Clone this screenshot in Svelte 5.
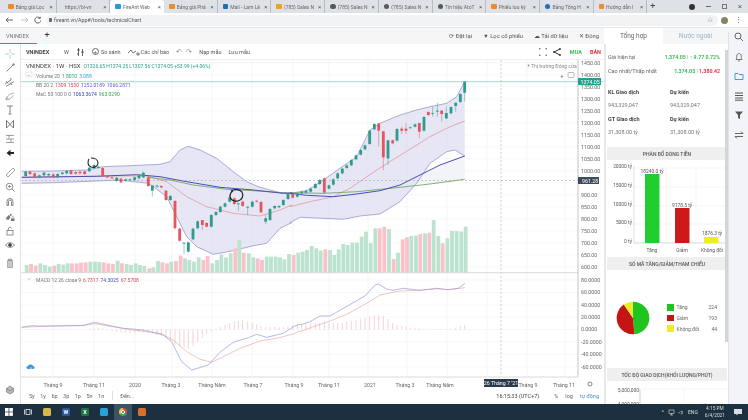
<script>
  const tabs = [
    ['Bảng giá Lọc', 'o'], ['https://bi-vn', 'b'], ['FireAnt Web', 'f'], ['Bảng giá Phá', 'o'],
    ['Mail - Lam Lê', 'm'], ['(785) Sales N', 'y'], ['(785) Sales N', 'g'], ['(785) Sales N', 'g'],
    ['Tín hiệu AtoT', 'g'], ['Phiếu lưu ký', 'o'], ['Bảng Tổng H', 'v'], ['Hướng dẫn l', 'o']
  ];
  const z7 = (p) => p.map(([x, y]) => [20 + x / 3, 100 + y / 3]);
  const z8 = (p) => p.map(([x, y]) => [290 + x / 3, 60 + y / 3]);
  const z9 = (p) => p.map(([x, y]) => [x / 3, 265 + y / 3]);
  const z10 = (p) => p.map(([x, y]) => [300 + x / 3, 265 + y / 3]);
  const line = (p) => p.map(([x, y], i) => `${i ? 'L' : 'M'}${x.toFixed(1)} ${y.toFixed(1)}`).join('');

  const upper = [...z7([[5,214],[100,213],[200,210],[250,200],[330,197],[420,193],[450,185],[480,150],[505,139],[540,150],[590,175],[640,215],[680,245],[720,262],[780,278],[815,280]]),
    ...z8([[0,400],[50,392],[100,360],[150,325],[200,290],[240,210],[270,190],[330,165],[380,150],[420,140],[470,130],[500,110],[524,65]])];
  const lower = [...z7([[5,250],[100,248],[230,243],[300,240],[385,250],[400,260],[440,290],[470,350],[500,410],[530,440],[580,463],[640,452],[700,437],[740,430],[780,385],[815,368]]),
    ...z8([[0,488],[30,472],[80,474],[160,478],[210,468],[270,462],[330,425],[380,370],[420,310],[470,275],[495,270],[524,288]])];
  const bandFill = line(upper) + [...lower].reverse().map(([x, y]) => `L${x.toFixed(1)} ${y.toFixed(1)}`).join('') + 'Z';
  const mid = [...z7([[5,232],[250,228],[380,228],[440,245],[500,290],[560,320],[640,340],[720,348],[780,330],[815,315]]),
    ...z8([[0,440],[60,425],[130,410],[180,385],[260,330],[340,280],[420,230],[480,200],[524,183]])];
  const ma50 = [...z7([[5,232],[230,229],[350,224],[420,230],[500,245],[600,262],[700,270],[790,280],[815,279]]),
    ...z8([[0,400],[50,406],[130,410],[200,402],[270,392],[330,375],[390,345],[450,315],[524,288]])];
  const ma100 = [...z7([[385,232],[450,240],[520,255],[620,268],[700,272],[790,278],[815,280]]),
    ...z8([[0,398],[100,400],[200,395],[330,382],[420,372],[524,358]])];
  const paleFill = line(z8([[375,372],[390,345],[450,315],[524,288],[524,358],[420,372]])) + 'Z';

  const c7 = [[17,215,228,'g'],[30,215,222,'r'],[44,220,232,'r'],[58,226,232,'g'],[72,218,226,'g'],[86,222,226,'g'],[100,223,232,'r'],[113,222,232,'g'],[127,218,222,'g'],[140,213,220,'g'],[153,212,222,'r'],[167,216,221,'r'],[180,215,220,'r'],[194,214,222,'r'],[208,203,214,'g'],[222,195,205,'g'],[235,200,204,'g'],[248,204,228,'r'],[262,228,232,'r'],[276,232,235,'r'],[290,233,243,'g'],[303,236,247,'r'],[317,238,243,'g'],[330,238,241,'g'],[344,232,240,'g'],[357,226,235,'g'],[370,218,232,'g'],[385,232,258,'r'],[397,256,272,'g',256,290],[411,257,260,'g'],[424,258,262,'r'],[438,272,300,'r'],[451,288,300,'g'],[465,303,385,'r'],[479,386,422,'r'],[492,428,431,'g',428,462],[505,427,455,'g'],[519,386,418,'g'],[533,364,385,'g'],[547,360,375,'r',360,390],[560,369,380,'r'],[574,345,380,'g'],[588,336,345,'g'],[601,320,336,'g'],[615,310,320,'g'],[629,292,305,'g'],[643,295,312,'r'],[655,310,313,'g',310,333],[668,305,318,'r'],[683,320,323,'g',320,345],[697,305,320,'g'],[710,302,305,'r'],[723,306,337,'r'],[737,355,365,'g',345,372],[750,327,360,'g'],[764,318,325,'g'],[777,318,322,'g'],[790,300,315,'g'],[804,282,297,'g']];
  const c8 = [[8,402,413,'r'],[22,400,410,'g'],[35,395,400,'g'],[48,392,398,'g'],[62,386,395,'g'],[76,372,384,'g'],[89,360,372,'g'],[103,355,398,'r'],[117,376,386,'g'],[130,358,374,'g'],[143,340,355,'g'],[157,326,340,'g'],[170,316,324,'g'],[184,300,316,'g'],[198,286,298,'g'],[212,270,284,'g'],[225,256,268,'g'],[239,212,252,'g'],[253,192,208,'g'],[266,190,212,'r',190,260],[280,214,292,'r',214,330],[294,241,295,'g',241,315],[308,241,250,'r'],[321,207,242,'g'],[335,206,212,'r',200,222],[348,206,212,'r',190,222],[361,202,204,'g'],[375,193,200,'g'],[388,189,215,'r',189,235],[402,171,212,'g'],[415,156,165,'r'],[428,159,161,'g',140,170],[442,152,155,'g',128,170],[455,152,162,'r',150,185],[469,159,175,'g',140,178],[483,141,160,'g'],[497,128,138,'g',128,155],[511,102,126,'g'],[524,64,98,'g',64,125]];
  const v7 = [495,492,497,490,495,500,497,492,494,490,490,490,488,487,485,485,486,487,490,492,482,490,492,495,490,495,498,505,502,483,487,490,485,483,467,475,480,485,472,480,468,490,480,463,472,460,445,420,458,460,472,475,480,470,470,470,472,478,462,468];
  const v8 = [585,578,575,570,558,565,572,568,570,585,568,552,555,548,548,530,515,550,505,505,500,507,597,578,538,532,528,527,522,520,518,480,528,550,535,513,513,515,500];

  const candles = [
    ...c7.map(([x, o, c, k, h, l], i) => ({ x: 20 + x / 3, o: 100 + o / 3, c: 100 + c / 3, k, h: 100 + (h ?? o - 3) / 3, l: 100 + (l ?? c + 3) / 3, v: 100 + v7[i] / 3 })),
    ...c8.map(([x, o, c, k, h, l], i) => ({ x: 290 + x / 3, o: 60 + o / 3, c: 60 + c / 3, k, h: 60 + (h ?? o - 3) / 3, l: 60 + (l ?? c + 3) / 3, v: 60 + v8[i] / 3 }))
  ];

  const macd = [...z9([[65,187],[95,182],[120,183],[160,183],[250,181],[285,172],[330,182],[370,190],[430,195],[490,210],[515,230],[545,290],[575,315],[625,300],[660,262],[700,232],[745,218],[770,208],[800,217],[850,205],[880,185],[898,178]]),
    ...z10([[0,180],[30,170],[60,153],[90,153],[130,130],[195,93],[225,60],[235,57],[260,72],[280,76],[310,70],[360,76],[410,70],[445,74],[475,70],[495,55]])];
  const signal = [...z9([[65,187],[160,183],[250,182],[285,176],[330,184],[400,195],[480,205],[520,225],[560,260],[600,283],[635,292],[670,275],[720,250],[780,228],[830,220],[880,207],[898,198]]),
    ...z10([[0,200],[40,185],[90,168],[140,148],[200,115],[240,90],[300,78],[360,76],[410,71],[445,74],[495,68]])];

  const histKeys = [[22,330],[88,329.5],[90,328],[100,327.5],[110,331],[125,333],[145,332],[165,337],[175,345],[190,349],[205,335],[215,329],[225,325],[235,321],[243,320],[255,324],[265,327],[285,327],[300,324],[320,323],[340,323],[365,318],[375,315],[382,315],[388,319],[395,325],[415,328],[433,329],[450,329],[465,325]];
  const histAt = (x) => {
    for (let i = 1; i < histKeys.length; i++) {
      if (x <= histKeys[i][0]) {
        const [a, b] = histKeys[i - 1], [c, d] = histKeys[i];
        return b + ((d - b) * (x - a)) / (c - a);
      }
    }
    return 329.5;
  };
  const hist = candles.map((c) => ({ x: c.x, y: histAt(c.x) }));

  const gridX = [53, 94, 135, 172, 212, 252, 293, 329, 368, 407, 447, 487, 527, 565];
  const prices = [1450, 1400, 1350, 1300, 1250, 1200, 1150, 1100, 1050, 1000, 950, 900, 850, 800, 750, 700, 650, 600];
  const priceY = (p) => 62.7 + (1450 - p) * 0.24;
  const macdTicks = [[280, '80.0000'], [292.5, '60.0000'], [305, '40.0000'], [317, '20.0000'], [329.5, '0.0000'], [342, '-20.0000'], [354.5, '-40.0000'], [367, '-60.0000']];
  const times = [[53,'Tháng 9'],[94,'Tháng 11'],[135,'2020'],[171,'Tháng 3'],[212,'Tháng Năm'],[253,'Tháng 7'],[294,'Tháng 9'],[329,'Tháng 11'],[370,'2021'],[405,'Tháng 3'],[440,'Tháng Năm'],[528,'Tháng 9'],[564,'Tháng 11']];
  const ranges = ['5y', '1y', '6p', '3p', '1p', '5n', '1n'];

  const pieData = [[224, '#1fc41f'], [193, '#c41414'], [44, '#ecec2c']];
  const total = 461;
  let acc = 0;
  const pie = pieData.map(([v, color]) => {
    const a0 = (acc / total) * Math.PI * 2;
    acc += v;
    const a1 = (acc / total) * Math.PI * 2;
    const pt = (a) => `${(17 + 16.3 * Math.sin(a)).toFixed(2)} ${(17 - 16.3 * Math.cos(a)).toFixed(2)}`;
    return { d: `M17 17L${pt(a0)}A16.3 16.3 0 ${a1 - a0 > Math.PI ? 1 : 0} 1 ${pt(a1)}Z`, color };
  });
</script>

<div class="screen">
  <div class="tabstrip">
    {#each tabs as [name, kind], i}
      <div class="tab" class:active={i === 2}>
        <span class="fav {kind}"></span><span class="tabname">{name}</span><span class="x">×</span>
      </div>
    {/each}
    <span class="newtab">+</span>
    <span class="winctl">
      <span class="rec"></span><span class="min"></span><span class="res"></span><span class="cl">×</span>
    </span>
  </div>

  <div class="addr">
    <svg class="nav" width="44" height="10" viewBox="0 0 44 10" fill="none" stroke="#555" stroke-width="0.9">
      <path d="M11 5H4M6.500 2.500L4 5l2.500 2.500" />
      <path d="M19 5h7M23.500 2.500L26 5l-2.500 2.500" stroke="#bbb" />
      <path d="M38 3a3 3 0 1 0 .8 2.500M38.300 1.800V3.400H36.700" />
    </svg>
    <div class="url"><span class="lock"></span>fireant.vn/App#/tools/technicalChart</div>
    <span class="star">☆</span>
    <span class="avatar"></span>
    <span class="dots">⋮</span>
  </div>

  <div class="apphead">
    <div class="indextab">VNINDEX</div>
    <span class="plus">+</span>
    <div class="headbtns">
      <span>⟳ Đặt lại</span><span>▼ Lọc cổ phiếu</span><span>☁ Tải dữ liệu</span><span>✕ Đóng</span>
    </div>
    <div class="sidetabs"><span class="on">Tổng hợp</span><span class="off">Nước ngoài</span></div>
    <div class="railtop"></div>
  </div>

  <div class="main">
    <div class="tools">
      <svg width="10" height="10" viewBox="0 0 10 10" fill="none" stroke="#7fcfc4" stroke-width=".7"><path d="M5 0v4M5 6v4M0 5h4M6 5h4" /></svg>
      <svg width="10" height="10" viewBox="0 0 10 10" fill="none" stroke="#777" stroke-width=".9"><path d="M1.500 8.500L8.500 1.500" /><circle cx="8.500" cy="1.500" r=".8" /></svg>
      <svg width="10" height="10" viewBox="0 0 10 10" fill="none" stroke="#666" stroke-width=".8"><path d="M0 7l6-4M1 9.500l8-5M5 1l1.500 2M1 4l2 2.500M5 5.500l2 2.500" /></svg>
      <svg width="10" height="10" viewBox="0 0 10 10" fill="none" stroke="#888" stroke-width=".7"><path d="M1 8c1-3 3-5 8-6M3 8.500c2.500 0 4-2 5-4" /><circle cx="2" cy="8" r="1" /></svg>
      <svg width="10" height="10" viewBox="0 0 10 10" fill="none" stroke="#777" stroke-width=".9"><path d="M2 1h6M5 1v8M3.500 9h3" /></svg>
      <svg width="10" height="10" viewBox="0 0 10 10" fill="none" stroke="#666" stroke-width=".9"><path d="M1.500 9V1.500L5 5.500l3.500-4V9M1.500 9L5 5.500 8.500 9" /></svg>
      <svg width="10" height="10" viewBox="0 0 10 10" fill="none" stroke="#777" stroke-width=".7"><path d="M1 1.500h8M1 5h8M1 8.500h8M4 1.500v3M6 5v3.500" /></svg>
      <svg width="10" height="10" viewBox="0 0 10 10" fill="#222"><path d="M1.500 5L5.500 1.800V4H9v2H5.500v2.200z" /></svg>
      <svg class="ruler" width="11" height="11" viewBox="0 0 11 11" fill="none" stroke="#888" stroke-width=".8"><path d="M1 8l7-7 2 2-7 7z" /></svg>
      <svg width="10" height="10" viewBox="0 0 10 10" fill="none" stroke="#777" stroke-width=".8"><circle cx="4.500" cy="4.500" r="3.300" /><path d="M7 7l2.500 2.500M3 4.500h3M4.500 3v3" /></svg>
      <svg class="magnet" width="10" height="10" viewBox="0 0 10 10" fill="none" stroke="#777" stroke-width=".9"><path d="M2 8.500V4.500a3 3 0 0 1 6 0v4H6.500v-4a1.500 1.500 0 0 0-3 0v4z" /></svg>
      <svg width="10" height="10" viewBox="0 0 10 10" fill="#777"><path d="M0.500 7l3-4 2 2-2 3zM5.500 1.500L7 3 5.800 4.200 4.500 3z" /><rect x="6" y="6.500" width="3.500" height="2.500" /><path d="M6.800 6.500V5.500a1 1 0 0 1 2 0v1" fill="none" stroke="#777" stroke-width=".5" /></svg>
      <svg width="10" height="10" viewBox="0 0 10 10" fill="none" stroke="#777" stroke-width=".8"><rect x="2" y="4.500" width="6" height="4.500" /><path d="M3.300 4.500V3a1.700 1.700 0 0 1 3.300-.5" /></svg>
      <svg class="eye" width="10" height="10" viewBox="0 0 10 10" fill="none" stroke="#555" stroke-width=".7"><path d="M.5 5c2-3 7-3 9 0-2 3-7 3-9 0z" /><circle cx="5" cy="5" r="1.500" fill="#333" /></svg>
      <svg width="10" height="10" viewBox="0 0 10 10" fill="#c8c8c8" stroke="#888" stroke-width=".6"><path d="M2.500 2.500h5V9.500h-5zM3.500 1h3v1.500h-3z" /></svg>
      <svg class="bulb" width="10" height="10" viewBox="0 0 10 10" fill="#bbb" stroke="#777" stroke-width=".7"><path d="M5 1l3.500 2.500V7L5 9 1.500 7V3.500z" /><path d="M1.500 3.500L5 6l3.500-2.500" fill="none" /></svg>
    </div>

    <div class="center">
      <div class="charttools">
        <b class="sym">VNINDEX</b>
        <span class="ti w">W</span>
        <svg class="ti" width="9" height="10" viewBox="0 0 9 10" fill="none" stroke="#555" stroke-width="0.9"><path d="M2.500 1v8M6.500 2v7M1 3h3M5 5h3M1 7h2" /></svg>
        <span class="ti add"><i>+</i> So sánh</span>
        <span class="ti ind"><svg width="12" height="8" viewBox="0 0 12 8" fill="none" stroke="#555" stroke-width="0.8"><path d="M0 5l3-3 2 3 3-2M8 6h4M10 4v4" /></svg> Các chỉ báo</span>
        <span class="ti undo">↶</span><span class="ti redo">↷</span>
        <span class="ti load">Nạp mẫu</span>
        <span class="ti">Lưu mẫu</span>
        <span class="tright">
          <svg width="8" height="8" viewBox="0 0 8 8" fill="none" stroke="#444" stroke-width="0.8"><path d="M0 2V0h2M6 0h2v2M8 6v2H6M2 8H0V6" /></svg>
          <svg class="share" width="8" height="8" viewBox="0 0 8 8" fill="none" stroke="#333"><path d="M7 1L1 4l6 3" /><circle cx="7" cy="1" r=".6" /><circle cx="1" cy="4" r=".6" /><circle cx="7" cy="7" r=".6" /></svg>
          <b class="buy">MUA</b><b class="sell">BÁN</b>
        </span>
      </div>

      <svg class="chart" width="583" height="331" viewBox="21 60 583 331" font-family="Roboto, sans-serif">
        <rect x="21" y="60" width="583" height="331" fill="#fff" />
        {#each gridX as x}<line x1={x} x2={x} y1="60" y2="376" stroke="#eef1f5" stroke-width="0.7" />{/each}
        {#each prices as p}<line x1="21" x2="578" y1={priceY(p)} y2={priceY(p)} stroke="#f1f3f7" stroke-width="0.7" />{/each}
        {#each macdTicks as [y]}<line x1="21" x2="578" y1={y} y2={y} stroke="#f1f3f7" stroke-width="0.7" />{/each}

        <path d={paleFill} fill="#f3f3fa" />
        <path d={bandFill} fill="#dcdcf0" fill-opacity="0.7" />
        <path d={line(upper)} fill="none" stroke="#8d8bc8" stroke-width="0.7" />
        <path d={line(lower)} fill="none" stroke="#8d8bc8" stroke-width="0.7" />

        {#each candles as c}
          <rect x={c.x - 0.9} y={c.v} width="3.800" height={Math.max(272.5 - c.v, 0)} fill={c.k === 'g' ? '#bbe3d0' : '#f9c2c8'} />
        {/each}

        <path d={line(mid)} fill="none" stroke="#e08f98" stroke-width="0.7" />
        <path d={line(ma100)} fill="none" stroke="#6faa62" stroke-width="0.9" />
        <path d={line(ma50)} fill="none" stroke="#4a4fb5" stroke-width="1" />

        {#each candles as c}
          <line x1={c.x} x2={c.x} y1={c.h} y2={c.l} stroke={c.k === 'g' ? '#3a9e90' : '#d9616b'} stroke-width="0.5" />
          <rect x={c.x - 1.4} y={c.o} width="2.800" height={Math.max(c.c - c.o, 0.8)} fill={c.k === 'g' ? '#2e9b8d' : '#e5555f'} />
        {/each}

        <path d="M89 159c-2 3-1 7 2 8 4 1 7-1 7-4 0-3-3-5-7-5" fill="none" stroke="#222" stroke-width="1.100" />
        <path d="M231 191c3-2 9-2 11 1 2 4 0 8-4 9-5 1-8-2-8-5 0-2 1-4 3-5" fill="none" stroke="#222" stroke-width="1.200" />

        <line x1="21" x2="604" y1="81.700" y2="81.700" stroke="#7cc8b8" stroke-width="0.7" />
        <line x1="21" x2="578" y1="180.500" y2="180.500" stroke="#999" stroke-width="0.5" stroke-dasharray="2 2" />
        <line x1="501" x2="501" y1="60" y2="376" stroke="#999" stroke-width="0.5" stroke-dasharray="2 2" />

        <line x1="21" x2="578" y1="272.700" y2="272.700" stroke="#cfcfcf" stroke-width="0.8" />
        <line x1="21" x2="578" y1="377" y2="377" stroke="#d0d0d0" stroke-width="0.8" />
        <line x1="578" x2="578" y1="60" y2="377" stroke="#aab" stroke-width="0.7" />

        {#each hist as h}
          <line x1={h.x} x2={h.x} y1={329.5} y2={h.y} stroke="#f2c0be" stroke-width="0.7" />
        {/each}
        <path d={line(signal)} fill="none" stroke="#e8a09c" stroke-width="0.6" />
        <path d={line(macd)} fill="none" stroke="#9a9ad8" stroke-width="0.7" />

        {#each prices as p}
          {#if p !== 950}<text x="581" y={priceY(p) + 1.800} class="ax">{p}.00</text>{/if}
        {/each}
        <rect x="578" y="78" width="23" height="7" fill="#27a08d" /><text x="580.500" y="83.600" class="ax white">1374.05</text>
        <rect x="578" y="177" width="21" height="7" fill="#3d4b5a" /><text x="582" y="182.600" class="ax white">961.28</text>
        {#each macdTicks as [y, t]}<text x="581" y={y + 1.800} class="ax">{t}</text>{/each}
        {#each times as [x, t]}<text x={x} y="387" class="ax" text-anchor="middle">{t}</text>{/each}
        <rect x="484" y="379" width="34" height="8" fill="#2a3a4b" /><text x="501" y="385" class="ax white" text-anchor="middle">26 Tháng 7 '21</text>
        <circle cx="590" cy="384" r="2" fill="none" stroke="#555" stroke-width="0.7" />

        <text x="26" y="68" class="leg"><tspan fill="#444" font-size="6">VNINDEX · 1W · HSX</tspan><tspan dx="3" fill="#2a9d8f">O1326.65 H1374.25 L1307.56 C1374.05 +53.99 (+4.06%)</tspan></text>
        <rect x="26" y="72" width="6" height="5" fill="#fff" stroke="#ccc" stroke-width="0.4" /><text x="29" y="76.500" class="leg" fill="#555" text-anchor="middle">−</text>
        <text x="36" y="77.500" class="leg"><tspan fill="#777">Volume 20</tspan><tspan dx="2" fill="#2ba66a">1.8010</tspan><tspan dx="2" fill="#3aa0d8">3.088</tspan></text>
        <text x="36" y="87" class="leg"><tspan fill="#777">BB 20 2</tspan><tspan dx="2" fill="#d8485a">1309.1530</tspan><tspan dx="2" fill="#6a5acd">1252.0189</tspan><tspan dx="2" fill="#6a5acd">1066.2871</tspan></text>
        <text x="36" y="96" class="leg"><tspan fill="#777">MaC 50 100 0 0</tspan><tspan dx="2" fill="#3b44b0">1063.3674</tspan><tspan dx="2" fill="#3a9d4c">963.0290</tspan></text>
        <text x="36" y="281.500" class="leg"><tspan fill="#777">MACD 12 26 close 9</tspan><tspan dx="2" fill="#d8485a">6.7317</tspan><tspan dx="2" fill="#4a4fb5">74.3025</tspan><tspan dx="2" fill="#d8485a">67.5708</tspan></text>
        <path d="M28 278.500l1 1 1-1" fill="none" stroke="#666" stroke-width="0.5" />

        <circle cx="528.500" cy="65.500" r="0.900" fill="#889" /><text x="531" y="67.500" class="leg" fill="#888">Thị trường Đóng cửa</text>
        <text x="562" y="77.500" class="leg" text-anchor="middle" fill="#555">+</text>
        <rect x="568" y="72.500" width="6" height="5" rx="1" fill="none" stroke="#777" stroke-width="0.5" />

        <path d="M28 369c-2 0-2-3 0-3 1-2 4-2 5 0 2 0 2 3 0 3z" fill="#3a9ad9" />
        <path d="M30 369l1-1.500 1 1.500" fill="none" stroke="#fff" stroke-width="0.5" />
      </svg>

      <div class="rangebar">
        {#each ranges as r}<span>{r}</span>{/each}
        <span class="sep"></span>
        <span>Đến...</span>
        <span class="rr"><span class="clock">16:15:33 (UTC+7)</span><span>%</span><span>log</span><span class="auto">tự động</span></span>
      </div>
    </div>

    <div class="side">
      <div class="row rowtop"><span>Giá hiện tại</span><span class="v"><em class="up">1,374.05</em> | <em class="up">↑ 9.77 0.72%</em></span></div>
      <div class="row"><span>Cao nhất/Thấp nhất</span><span class="v"><em class="up">1,374.05</em> | <em class="dn">1,380.42</em></span></div>
      <div class="pair head first"><b>KL Giao dịch</b><b>Dự kiến</b></div>
      <div class="pair"><span>943,329,047</span><span>943,329,047</span></div>
      <div class="pair head"><b>GT Giao dịch</b><b>Dự kiến</b></div>
      <div class="pair"><span>31,308.00 tỷ</span><span>31,308.00 tỷ</span></div>

      <div class="sec s1">PHÂN BỔ DÒNG TIỀN</div>
      <svg class="bars" width="122" height="96" viewBox="604 160 122 96" font-family="Roboto, sans-serif">
        <line x1="664" x2="664" y1="165" y2="242" stroke="#f0f0f0" stroke-width="0.7" />
        <line x1="694" x2="694" y1="165" y2="242" stroke="#f0f0f0" stroke-width="0.7" />
        {#each [[167,'20000 tỷ'],[186,'15000 tỷ'],[205,'10000 tỷ'],[223,'5000 tỷ'],[242,'0 tỷ']] as [y, t]}
          <text x="630" y={y} class="bt" text-anchor="end">{t}</text>
          <line x1="631" x2="726" y1={y} y2={y} stroke="#f0f0f0" stroke-width="0.7" />
        {/each}
        <line x1="632" x2="632" y1="165" y2="242" stroke="#ccc" stroke-width="0.6" />
        <line x1="632" x2="726" y1="242" y2="242" stroke="#ccc" stroke-width="0.6" />
        <rect x="643" y="173" width="14.500" height="69" fill="#1fcf2f" />
        <rect x="673" y="207" width="14.500" height="35" fill="#cc1a1a" />
        <rect x="702" y="236" width="14.500" height="6" fill="#eeee22" />
        <text x="650" y="172" class="bt" text-anchor="middle">18240.0 tỷ</text>
        <text x="680" y="206" class="bt" text-anchor="middle">9178.5 tỷ</text>
        <text x="710" y="234" class="bt" text-anchor="middle">1876.3 tỷ</text>
        <text x="650" y="251" class="bt" text-anchor="middle">Tăng</text>
        <text x="680" y="251" class="bt" text-anchor="middle">Giảm</text>
        <text x="710" y="251" class="bt" text-anchor="middle">Không đổi</text>
      </svg>

      <div class="sec s2">SỐ MÃ TĂNG/GIẢM/THAM CHIẾU</div>
      <div class="piebox">
        <svg width="34" height="34" viewBox="0 0 34 34">
          {#each pie as p}<path d={p.d} fill={p.color} />{/each}
        </svg>
        <div class="legend">
          <div><i class="sw gr"></i><span>Tăng</span><em>224</em></div>
          <div><i class="sw re"></i><span>Giảm</span><em>193</em></div>
          <div><i class="sw ye"></i><span>Không đổi</span><em>44</em></div>
        </div>
      </div>

      <div class="sec s3">TỐC ĐỘ GIAO DỊCH(KHỐI LƯỢNG/PHÚT)</div>
      <svg class="speed" width="122" height="26" viewBox="604 378 122 26" font-family="Roboto, sans-serif">
        <text x="637" y="388.500" class="bt" text-anchor="end" font-size="5.800">5,000,000</text>
        <text x="637" y="403" class="bt" text-anchor="end" font-size="5.800">4,000,000</text>
        <path d="M638 387v17M636 387h2M636 402h2" stroke="#999" stroke-width="0.5" fill="none" />
        <path d="M638 386H726M682 386v18" stroke="#eee" stroke-width="0.6" fill="none" />
        <path d="M696 403c3-2 11-2 15 0" stroke="#35b04a" stroke-width="1.500" stroke-dasharray="1.500 .6" fill="none" />
      </svg>
      <div class="thumb"></div>
    </div>

    <div class="rail">
      <svg width="10" height="10" viewBox="0 0 10 10" fill="none" stroke="#666"><circle cx="4" cy="4" r="3" /><path d="M6.200 6.200L9 9" /></svg>
      <svg width="10" height="10" viewBox="0 0 10 10" fill="none" stroke="#666" stroke-width=".9"><path d="M2 7.500c1-1 .5-3 1-4.500 1-2 3-2 4 0 .5 1.500 0 3.500 1 4.500zM4 8.500c.5.700 1.500.7 2 0" /></svg>
      <svg width="10" height="10" viewBox="0 0 10 10" fill="none" stroke="#3a8fc4" stroke-width=".9"><path d="M1 2.500h3l1 1h4v5H1z" /></svg>
      <svg width="10" height="10" viewBox="0 0 10 10" fill="none" stroke="#555"><path d="M1 2h8M1 4.500h8M1 7h8M1 9.200h8" /></svg>
      <svg width="10" height="10" viewBox="0 0 10 10" fill="#555"><path d="M1 1.500h8L6 5v4L4 8V5z" /></svg>
      <svg width="10" height="10" viewBox="0 0 10 10" fill="none" stroke="#555" stroke-width=".9"><path d="M1 3.500h8L7 1.500M9 6.500H1l2 2" /></svg>
    </div>
  </div>

  <div class="taskbar">
    <svg width="8" height="8" viewBox="0 0 8 8" fill="#fff" class="win"><rect width="3.600" height="3.600" /><rect x="4.300" width="3.600" height="3.600" /><rect y="4.300" width="3.600" height="3.600" /><rect x="4.300" y="4.300" width="3.600" height="3.600" /></svg>
    <svg width="8" height="8" viewBox="0 0 8 8" fill="none" stroke="#fff" stroke-width=".7" class="tv"><rect x="2" y="1.500" width="4" height="5" /><path d="M0.500 1.500V6.500M7.500 1.500V6.500" /></svg>
    <span class="app ex"></span>
    <span class="app wd">W</span>
    <span class="app xl">X</span>
    <span class="app ol"></span>
    <span class="crbox"><i></i></span>
    <span class="app pp"></span>
    <span class="tray">
      <span class="caret">^</span>
      <svg width="7" height="7" viewBox="0 0 7 7" fill="none" stroke="#ddd" stroke-width=".6"><rect x="1" y="1" width="5" height="3.500" /><path d="M3.500 4.500V6M2 6h3" /></svg>
      <span class="snd">◁ı</span>
      <span class="eng">ENG</span>
      <span class="clk"><span>4:15 PM</span><span>6/4/2021</span></span>
      <svg width="8" height="8" viewBox="0 0 8 8" fill="#ddd" class="msg"><path d="M0 1h8v5H4L2.500 7.500V6H0z" /></svg>
    </span>
  </div>
</div>

<style>
  :global(body) { margin: 0; background: #fff; }
  * { box-sizing: border-box; }
  .screen {
    width: 748px; height: 420px; overflow: hidden;
    display: flex; flex-direction: column;
    font-family: Roboto, "Open Sans", sans-serif; font-size: 5.5px; color: #555;
    background: #fff;
    filter: blur(0.3px);
  }
  em, i { font-style: normal; }

  .tabstrip { height: 13px; flex: none; background: #dee1e6; display: flex; align-items: center; padding-left: 3px; }
  .tab { width: 53.700px; height: 13px; display: flex; align-items: center; padding: 0 3px 0 5px; gap: 2px; color: #666; font-size: 5px; border-right: 1px solid #b8bbc0; }
  .tab.active { background: #fff; border-radius: 3px 3px 0 0; border-right: none; }
  .fav { width: 5.500px; height: 5.500px; flex: none; border-radius: 1px; background: #ec8c2d; }
  .fav.b { background: #dfe3e6; width: 1px; }
  .fav.f { background: #2c97de; }
  .fav.m { background: #1f6fb5; }
  .fav.y { background: #e8a51c; }
  .fav.g { background: #55595c; border-radius: 50%; }
  .fav.v { background: #1a6fc0; border-radius: 50%; }
  .tabname { flex: 1; overflow: hidden; white-space: nowrap; }
  .x { font-size: 6px; color: #555; }
  .newtab { margin-left: 3px; font-size: 9px; color: #444; line-height: 1; }
  .winctl { margin-left: auto; display: flex; align-items: center; gap: 11px; padding-right: 6px; }
  .rec { width: 6px; height: 6px; border-radius: 50%; background: #333; }
  .min { width: 5px; height: 1px; background: #666; }
  .res { width: 5px; height: 5px; border: 1px solid #777; }
  .cl { font-size: 8px; color: #666; line-height: 1; }

  .addr { height: 15px; flex: none; background: #fff; display: flex; align-items: center; padding-left: 2px; border-bottom: 1px solid #e4e6e9; }
  .nav { flex: none; }
  .url { flex: 1; height: 11px; background: #f1f3f4; border-radius: 6px; display: flex; align-items: center; padding-left: 3px; gap: 2px; color: #555; font-size: 5.300px; margin-right: 2px; }
  .lock { width: 3px; height: 3.500px; background: #666; border-radius: 1px; }
  .star { color: #666; font-size: 7px; margin: 0 3px 0 -13px; }
  .avatar { width: 7px; height: 7px; background: #8a8266; border-radius: 50%; margin: 0 7px 0 5px; }
  .dots { color: #555; font-size: 7px; margin-right: 6px; }

  .apphead { height: 16px; flex: none; background: #f5f6f8; display: flex; align-items: stretch; }
  .indextab { width: 37px; display: flex; align-items: center; padding-left: 6px; color: #777; border-bottom: 1px solid #26a08f; font-size: 5.500px; }
  .plus { width: 20px; text-align: center; color: #333; font-size: 9px; line-height: 14px; }
  .headbtns { margin-left: auto; display: flex; align-items: center; gap: 11px; padding-right: 5px; color: #555; font-size: 5.800px; }
  .sidetabs { width: 124px; display: flex; font-size: 6.500px; }
  .sidetabs span { display: flex; align-items: center; justify-content: center; }
  .sidetabs .on { width: 59px; background: #fff; color: #666; }
  .sidetabs .off { flex: 1; color: #9ab6c8; }
  .railtop { width: 20px; background: #f5f6f8; }

  .main { flex: 1; min-height: 0; display: flex; }
  .tools { width: 21px; flex: none; background: #fff; border-right: 1px solid #e2e2e2; display: flex; flex-direction: column; align-items: center; padding-top: 5px; gap: 4.100px; padding-bottom: 9px; }
  .tools svg { flex: none; }
  .ruler { margin-top: 5px; }
  .magnet { margin-top: 1.500px; }
  .eye + svg { margin-top: 4px; }
  .bulb { margin-top: auto; }

  .center { width: 583px; flex: none; display: flex; flex-direction: column; background: #fff; }
  .charttools { height: 16px; flex: none; display: flex; align-items: center; padding-left: 5px; font-size: 5.500px; color: #555; border-bottom: 1px solid #eceef1; }
  .sym { color: #444; width: 36px; font-size: 5.500px; }
  .ti { display: inline-flex; align-items: center; gap: 1px; margin-right: 7px; }
  .w { margin-left: 2px; }
  .add i { border: 0.6px solid #666; border-radius: 50%; width: 7px; height: 7px; display: inline-flex; align-items: center; justify-content: center; margin-right: 1px; }
  .undo, .redo { font-size: 7px; color: #888; margin-right: 4px; }
  .load { margin-left: 3px; }
  .tright { margin-left: auto; display: flex; align-items: center; gap: 6px; padding-right: 2px; }
  .buy { color: #3dbb55; margin: 0 2px 0 3px; }
  .sell { color: #d8333e; margin-right: 1px; }
  .chart { display: block; flex: none; }
  .ax { font-size: 5.300px; fill: #666; }
  .white { fill: #fff; }
  .leg { font-size: 5px; }
  .rangebar { flex: 1; display: flex; align-items: center; gap: 5.500px; padding: 0 5px 5px 8px; color: #666; font-size: 5.500px; background: #fff; }
  .sep { width: 1px; height: 9px; background: #ddd; margin: 0 2px; }
  .rr { margin-left: auto; display: flex; align-items: center; gap: 7px; }
  .clock { margin-right: 8px; color: #444; }
  .auto { color: #4a90c8; }

  .side { width: 124px; flex: none; background: #fff; border-left: 2px solid #e6e8eb; position: relative; padding: 6px 4px 0 2px; overflow: hidden; }
  .row { display: flex; justify-content: space-between; height: 14px; align-items: center; font-size: 5.500px; color: #666; padding-right: 4px; }
  .v { font-size: 5.300px; color: #999; }
  .up { color: #2fb84a; font-weight: 600; }
  .dn { color: #d8333e; font-weight: 600; }
  .pair { display: grid; grid-template-columns: 62px 1fr; height: 13.500px; align-items: center; font-size: 5.500px; color: #777; }
  .pair.head { color: #444; }
  .pair.first { margin-top: 7px; }
  .sec { margin: 0 0 0 -1px; background: #efefef; height: 13px; display: flex; align-items: center; justify-content: center; font-size: 5px; color: #555; width: 120px; font-weight: 500; }
  .s1 { margin-top: 8px; }
  .bars { display: block; margin: 1px 0 0 -2px; }
  .bt { font-size: 4.900px; fill: #555; }
  .piebox { height: 98px; display: flex; align-items: center; padding: 0 0 2px 8px; gap: 17px; }
  .legend { flex: 1; display: flex; flex-direction: column; gap: 3.700px; color: #666; font-size: 5px; padding-right: 7px; }
  .legend div { display: flex; align-items: center; gap: 3px; height: 7px; }
  .legend em { margin-left: auto; }
  .sw { width: 6.500px; height: 6.500px; }
  .gr { background: #1fc41f; } .re { background: #c41414; } .ye { background: #ecec2c; }
  .speed { display: block; margin-left: -2px; }
  .thumb { position: absolute; right: 0; top: 6px; width: 3px; height: 292px; background: #d3d5d9; }

  .rail { flex: 1; background: #f3f4f7; border-left: 1px solid #e0e2e5; display: flex; flex-direction: column; align-items: center; gap: 9.500px; margin-top: -12px; }

  .taskbar { height: 16px; flex: none; background: #1c3040; display: flex; align-items: center; padding-left: 5px; }
  .win { margin-right: 11px; }
  .tv { margin-right: 11px; }
  .app { width: 8px; height: 8px; border-radius: 1.500px; margin-right: 11px; color: #fff; font-size: 5.500px; display: flex; align-items: center; justify-content: center; font-weight: 700; flex: none; }
  .ex { background: #d8b84a; }
  .wd { background: #2b579a; }
  .xl { background: #217346; }
  .ol { background: #29a3dc; }
  .crbox { width: 18px; height: 16px; margin: 0 6px 0 -5px; background: #3c5365; display: flex; align-items: center; justify-content: center; flex: none; }
  .crbox i { width: 8px; height: 8px; border-radius: 50%; background: radial-gradient(circle, #4a90e2 0 25%, #fff 26% 34%, transparent 35%), conic-gradient(#dd4b39 0 33%, #38a853 33% 66%, #f2c230 66%); }
  .pp { background: #d9702a; }
  .tray { margin-left: auto; display: flex; align-items: center; gap: 3px; color: #ddd; font-size: 5px; padding-right: 6px; }
  .caret { margin-right: 1px; }
  .snd { font-size: 4.500px; }
  .eng { margin: 0 4px 0 2px; }
  .clk { display: flex; flex-direction: column; align-items: center; line-height: 7px; font-size: 4.800px; margin-right: 6px; }
  .msg { flex: none; }
</style>
